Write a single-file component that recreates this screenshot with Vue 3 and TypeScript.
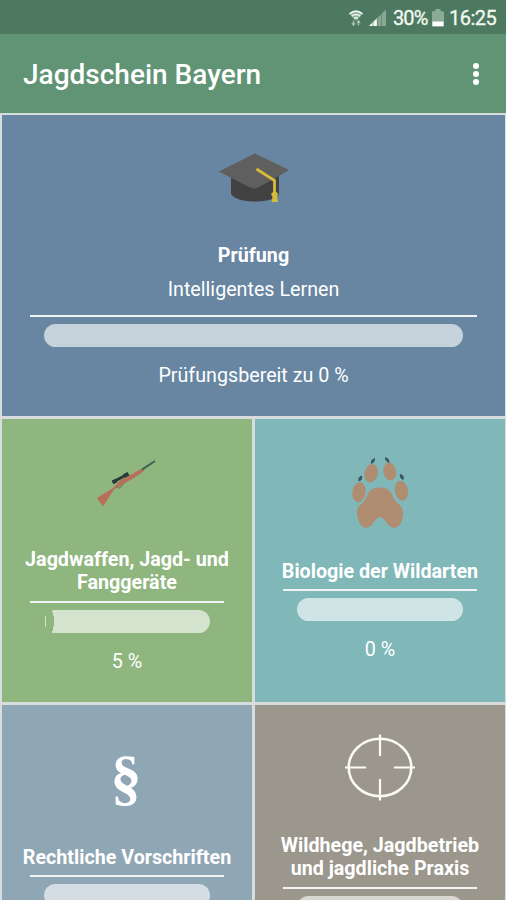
<script setup lang="ts">
interface Topic {
  id: string
  lines: string[]
  progress?: number
}

const exam = { title: 'Prüfung', subtitle: 'Intelligentes Lernen', progress: 0 }

const topics: Topic[] = [
  { id: 'weapons', lines: ['Jagdwaffen, Jagd- und', 'Fanggeräte'], progress: 5 },
  { id: 'biology', lines: ['Biologie der Wildarten'], progress: 0 },
  { id: 'law', lines: ['Rechtliche Vorschriften'] },
  { id: 'practice', lines: ['Wildhege, Jagdbetrieb', 'und jagdliche Praxis'] },
]
</script>

<template>
  <div class="screen">
    <div class="status">
      <svg class="wifi" width="16" height="18" viewBox="0 0 16 18">
        <path d="M1 4.600Q8-1 15 4.600L8 12z" fill="#8fae9c" />
        <path d="M1.500 4.800Q8-.6 14.500 4.800M3.800 7.200Q8 4 12.200 7.200M6 9.400Q8 8 10 9.400" fill="none" stroke="#eef5ee" stroke-width="1.500" />
        <path d="M5.500 11.500v4.500M3.800 14.200l1.700 2 1.600-2M10.500 16.500V12M8.900 13.800l1.600-2 1.700 2" fill="none" stroke="#a9c1b1" stroke-width="1.300" />
      </svg>
      <svg class="signal" width="19" height="18" viewBox="0 0 19 18">
        <path d="M18 .5V17H1z" fill="#86a893" />
        <path d="M9 9.200V17H1z" fill="#f4faf3" />
        <path d="M5 12v5M9.300 8v9M13.500 4v13" stroke="#5d876d" stroke-width=".7" />
      </svg>
      <span class="percent">30%</span>
      <svg class="battery" width="12" height="18" viewBox="0 0 12 18">
        <path d="M3.500 0h5v2.200H11a1 1 0 0 1 1 1V17a1 1 0 0 1-1 1H1a1 1 0 0 1-1-1V3.200a1 1 0 0 1 1-1h2.500z" fill="#8aac97" />
        <path d="M.5 12.500h11V17H.5z" fill="#fff" />
      </svg>
      <span class="clock">16:25</span>
    </div>

    <header class="appbar">
      <h1>Jagdschein Bayern</h1>
      <button class="menu" aria-label="Menü"><i /><i /><i /></button>
    </header>

    <main class="grid">
      <section class="tile exam">
        <svg class="icon" width="72" height="72" viewBox="0 0 72 72">
          <path d="M13 32h48v20c-5 10-43 10-48 0z" fill="#424242" />
          <path d="M37 11.500L71 28Q55 38 40 45.500Q36 47.500 31 45L.8 29.500Z" fill="#5f5f5f" />
          <path d="M38.500 27L56.500 38.500V50" fill="none" stroke="#d3bd3b" stroke-width="2.800" />
          <path d="M56.500 48.500l3.500 3-1 3.500 1 5h-6.500l1-5-1.500-3z" fill="#d3bd3b" />
        </svg>
        <h2><span>{{ exam.title }}</span></h2>
        <p class="subtitle">{{ exam.subtitle }}</p>
        <hr>
        <div class="bar" />
        <p class="value">Prüfungsbereit zu {{ exam.progress }} %</p>
      </section>

      <section v-for="topic in topics" :key="topic.id" class="tile" :class="topic.id">
        <svg v-if="topic.id === 'weapons'" class="icon" width="72" height="72" viewBox="0 0 72 72">
          <path d="M6 52L22 42L29 34.500L42 27.500L51 22.500L53 25L42 32.500L30 39.500L23 43.500L12 60.500Z" fill="#b66f59" />
          <path d="M26 41q3 3 6-3" fill="none" stroke="#667351" stroke-width="1" />
          <path d="M51 23.700L64 15" stroke="#3e6257" stroke-width="2" />
          <path d="M22 36L37 28" stroke="#263a38" stroke-width="3" />
          <path d="M21.500 36.500l4-2M33 30l4.500-2.300" stroke="#263a38" stroke-width="4" />
        </svg>
        <svg v-else-if="topic.id === 'biology'" class="icon" width="72" height="72" viewBox="0 0 72 72">
          <g fill="#b08c70">
            <ellipse cx="27.200" cy="16.200" rx="6.600" ry="9.200" transform="rotate(14 27.200 16.200)" />
            <ellipse cx="45.700" cy="14.500" rx="6.300" ry="9" transform="rotate(-12 45.700 14.500)" />
            <ellipse cx="15" cy="35.200" rx="6.700" ry="10" transform="rotate(8 15 35.200)" />
            <ellipse cx="57.400" cy="33.700" rx="6.600" ry="10" transform="rotate(-10 57.400 33.700)" />
            <path d="M36 30.500C27 30.500 24.500 35 22 41C19 48 13 47 13 56C13 63 17 70.800 22.500 70.800C29 70.800 30.500 60 36 60C41 60 43.500 70.800 50 70.800C56 70.800 59 63 59 56C59 47 52.500 48 49.500 41C47 35 45 30.500 36 30.500Z" />
          </g>
          <path d="M27.500 6.500Q26.500 3 30.500 1.500Q31 5 27.500 6.500M45 5.500Q41 4 41.500 .5Q45 1.500 45 5.500M15 24Q14 20 17.500 19Q18.500 23 15 24M59 22.500Q55.500 21 56.200 17.500Q60.500 18.500 59 22.500" fill="#3f5560" stroke="#3f5560" />
        </svg>
        <span v-else-if="topic.id === 'law'" class="icon paragraph">§</span>
        <svg v-else class="icon" width="72" height="72" viewBox="0 0 72 72">
          <ellipse cx="36" cy="35.500" rx="31.300" ry="28.700" fill="none" stroke="#fbfbf5" stroke-width="2.600" />
          <path d="M36 2.500V24M36 47V68.500M1 35.500H22M50 35.500H71" fill="none" stroke="#fbfbf5" stroke-width="2.200" />
        </svg>
        <h2><span v-for="line in topic.lines" :key="line">{{ line }}</span></h2>
        <hr>
        <div class="bar" :class="{ started: topic.progress }" />
        <p class="value"><template v-if="topic.progress !== undefined">{{ topic.progress }} %</template></p>
      </section>
    </main>
  </div>
</template>

<style>
body {
  margin: 0;
  overflow: hidden;
}
</style>

<style scoped>
.screen {
  height: 900px;
  overflow: hidden;
  display: flex;
  flex-direction: column;
  background: #d7dcdd;
  color: #fff;
  font-family: Roboto, sans-serif;
}

.status {
  flex: none;
  box-sizing: border-box;
  height: 34px;
  padding: 1px 10px 0 0;
  display: flex;
  align-items: center;
  justify-content: flex-end;
  background: #4c7960;
  font-size: 20px;
  color: #f3f9f1;
  -webkit-text-stroke: .3px #f3f9f1;
}

.wifi { margin-right: 4px; }
.signal { margin-right: 6px; }
.percent { width: 34px; margin-right: 5px; letter-spacing: -.9px; }
.battery { margin-right: 5px; }
.clock { width: 47px; letter-spacing: -.5px; }

.appbar {
  flex: none;
  box-sizing: border-box;
  height: 79px;
  padding: 1px 27px 0 23px;
  display: flex;
  align-items: center;
  justify-content: space-between;
  background: #609475;
}

h1 {
  margin: 0;
  font-size: 28px;
  font-weight: 500;
}

.menu {
  padding: 0;
  border: 0;
  background: none;
  display: grid;
  gap: 2.200px;
}

.menu i {
  width: 6.200px;
  height: 6.200px;
  border-radius: 50%;
  background: #fff;
}

.grid {
  flex: none;
  padding: 2px 1px 0 2px;
  display: grid;
  grid-template-columns: 250px 250px;
  grid-template-rows: 300.500px 283px 283px;
  gap: 3px;
}

.tile {
  box-sizing: border-box;
  padding-bottom: 2px;
  display: flex;
  flex-direction: column;
  align-items: center;
  justify-content: center;
}

.exam {
  grid-column: 1 / -1;
  background: #6886a1;
}

.weapons { background: #8fb67f; }
.biology { background: #80b7b9; }
.law { background: #8fa6b5; }
.practice { background: #9b978d; }

.icon {
  flex: none;
  width: 72px;
  height: 72px;
  overflow: visible;
}

.paragraph {
  font: 700 62px/68px "Liberation Serif", serif;
  text-align: center;
  text-indent: -2px;
}

h2 {
  margin: 31px 0 -1px;
  font-size: 19.700px;
  line-height: 23px;
  font-weight: 700;
  text-align: center;
}

.exam h2,
.weapons h2,
.practice h2 {
  margin: 30px 0 0;
}

h2 span {
  display: block;
  white-space: nowrap;
}

p {
  margin: 0;
  font-size: 19.700px;
  line-height: 23px;
}

.subtitle { margin: 11px 0 7px; }

hr {
  width: 194px;
  height: 2px;
  margin: 7px 0;
  border: 0;
  background: #f0f5f4;
}

.bar {
  width: 166px;
  height: 23px;
  border-radius: 12px;
  background: rgba(255, 255, 255, .62);
}

.bar.started {
  background:
    radial-gradient(ellipse 1px 6px at 1.500px 50%, rgba(255, 255, 255, .62) 80%, transparent 100%),
    radial-gradient(ellipse 10px 18px at 0 50%, transparent 98%, rgba(255, 255, 255, .62) 100%);
}

.value {
  min-height: 23px;
  margin-top: 17px;
}

.exam hr { width: 447px; }
.exam .bar { width: 419px; }
</style>
